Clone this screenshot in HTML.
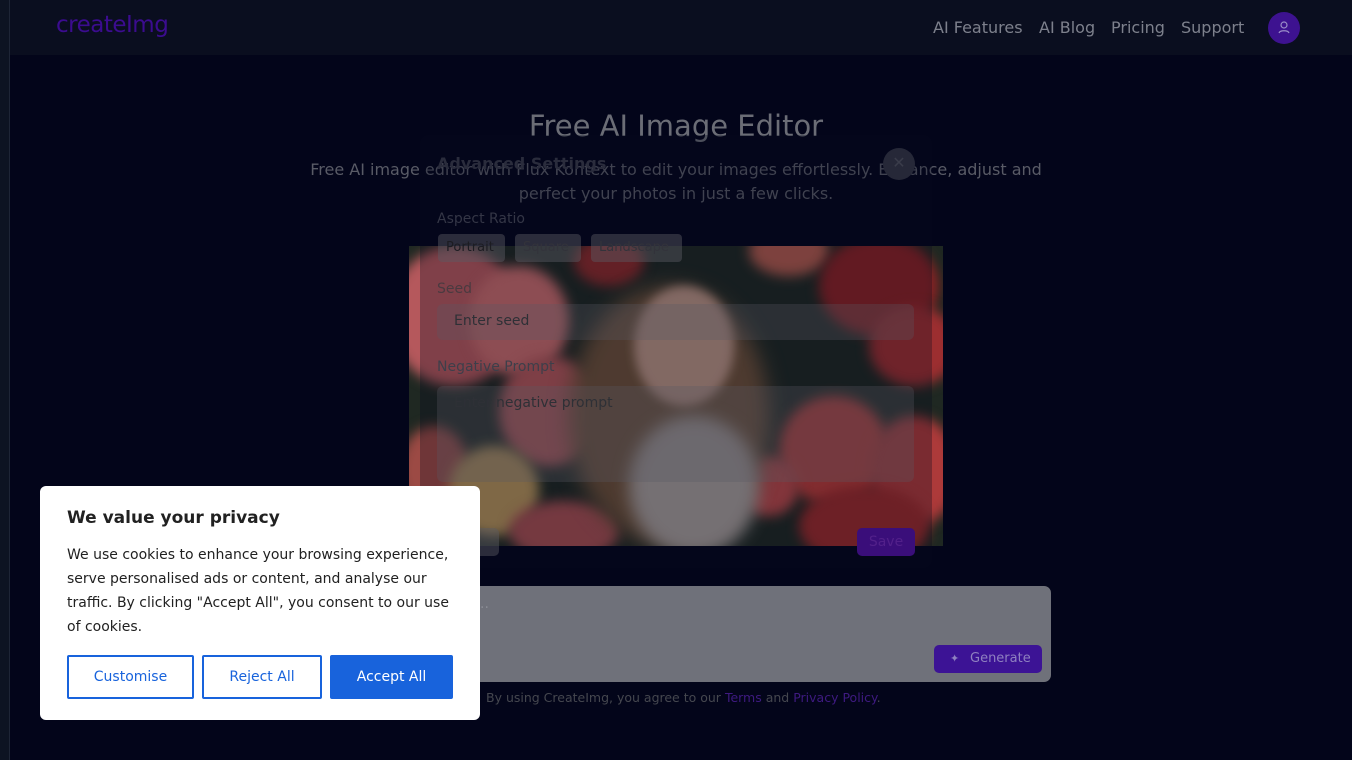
<!DOCTYPE html>
<html><head><meta charset="utf-8"><style>
*{margin:0;padding:0;box-sizing:border-box}
body{width:1352px;height:760px;overflow:hidden;background:#03051a;font-family:"DejaVu Sans","Liberation Sans",sans-serif;position:relative;color:#9a9ca8}
.abs{position:absolute}
.f{position:absolute;border-radius:50%}
</style></head><body>
<div class="abs" style="left:0;top:0;width:10px;height:760px;background:#0d1322;border-right:1px solid #1e2536"></div>
<div class="abs" style="left:10px;top:0;width:1342px;height:55px;background:#0a0e1f"></div>
<div class="abs" style="left:56px;top:12px;font-size:23px;color:#3b0c8f;letter-spacing:-0.5px">createImg</div>
<div class="abs" style="left:933px;top:18px;font-size:16px;color:#7d808c">AI Features</div>
<div class="abs" style="left:1039px;top:18px;font-size:16px;color:#7d808c">AI Blog</div>
<div class="abs" style="left:1111px;top:18px;font-size:16px;color:#7d808c">Pricing</div>
<div class="abs" style="left:1181px;top:18px;font-size:16px;color:#7d808c">Support</div>
<div class="abs" style="left:1268px;top:12px;width:32px;height:32px;border-radius:50%;background:#3d1290"><svg width="32" height="32" viewBox="0 0 32 32"><circle cx="16" cy="13" r="3" fill="none" stroke="#9a8cc8" stroke-width="1.2"/><path d="M11 21c1-3 9-3 10 0" fill="none" stroke="#9a8cc8" stroke-width="1.2"/></svg></div>

<div class="abs" style="left:0;top:109px;width:1352px;text-align:center;font-size:29px;color:#6b6d76">Free AI Image Editor</div>
<div class="abs" style="left:300px;top:158px;width:752px;text-align:center;font-size:16px;line-height:24px;color:#595b66">Free AI image editor with Flux Kontext to edit your images effortlessly. Enhance, adjust and perfect your photos in just a few clicks.</div>

<!-- image -->
<div class="abs" style="left:409px;top:246px;width:534px;height:300px;overflow:hidden;background:#1f2822">
<div class="f" style="left:-20px;top:0px;width:130px;height:140px;background:#b5585c;filter:blur(6px)"></div>
<div class="f" style="left:60px;top:20px;width:100px;height:110px;background:#c76a6a;filter:blur(6px)"></div>
<div class="f" style="left:90px;top:110px;width:100px;height:110px;background:#b25658;filter:blur(6px)"></div>
<div class="f" style="left:-10px;top:180px;width:70px;height:90px;background:#9c4a44;filter:blur(6px)"></div>
<div class="f" style="left:40px;top:200px;width:90px;height:90px;background:#b39158;filter:blur(6px)"></div>
<div class="f" style="left:100px;top:255px;width:110px;height:60px;background:#a54e50;filter:blur(6px)"></div>
<div class="f" style="left:165px;top:-10px;width:70px;height:50px;background:#8c2a2a;filter:blur(6px)"></div>
<div class="f" style="left:340px;top:-20px;width:80px;height:50px;background:#b05a4c;filter:blur(6px)"></div>
<div class="f" style="left:410px;top:-10px;width:120px;height:100px;background:#8a2224;filter:blur(6px)"></div>
<div class="f" style="left:460px;top:60px;width:90px;height:80px;background:#9c2e30;filter:blur(6px)"></div>
<div class="f" style="left:370px;top:150px;width:110px;height:110px;background:#b83c38;filter:blur(6px)"></div>
<div class="f" style="left:460px;top:170px;width:90px;height:110px;background:#ad3a3a;filter:blur(6px)"></div>
<div class="f" style="left:390px;top:240px;width:130px;height:80px;background:#9a2a2a;filter:blur(6px)"></div>
<div class="f" style="left:330px;top:210px;width:60px;height:60px;background:#b84848;filter:blur(6px)"></div>
<div class="f" style="left:160px;top:40px;width:200px;height:260px;background:#6d5038;filter:blur(10px)"></div>
<div class="f" style="left:225px;top:40px;width:100px;height:120px;background:#b89282;filter:blur(5px)"></div>
<div class="f" style="left:220px;top:170px;width:130px;height:140px;background:#a59c98;filter:blur(8px)"></div>
</div>

<!-- modal -->
<div class="abs" style="left:420px;top:135px;width:512px;height:433px;border-radius:8px;background:rgba(8,10,30,0.3)"></div>
<div class="abs" style="left:437px;top:154px;font-size:16px;font-weight:bold;color:#2a2c3c">Advanced Settings</div>
<div class="abs" style="left:883px;top:148px;width:32px;height:32px;border-radius:50%;background:#262838;color:#3a3c4a;text-align:center;line-height:30px;font-size:16px">✕</div>
<div class="abs" style="left:437px;top:211px;font-size:14px;color:#343646">Aspect Ratio</div>
<div class="abs" style="left:438px;top:234px;width:67px;height:28px;border-radius:4px;background:rgba(90,90,100,0.45);font-size:13px;color:#1c1c22;padding:6px 8px">Portrait</div>
<div class="abs" style="left:515px;top:234px;width:66px;height:28px;border-radius:4px;background:rgba(90,90,100,0.45);font-size:13px;color:#33333b;padding:6px 8px">Square</div>
<div class="abs" style="left:591px;top:234px;width:91px;height:28px;border-radius:4px;background:rgba(90,90,100,0.45);font-size:13px;color:#33333b;padding:6px 8px">Landscape</div>
<div class="abs" style="left:437px;top:281px;font-size:14px;color:#4a3a40">Seed</div>
<div class="abs" style="left:437px;top:304px;width:477px;height:36px;border-radius:6px;background:rgba(90,90,100,0.3);font-size:14px;color:#2e3036;padding:9px 17px">Enter seed</div>
<div class="abs" style="left:437px;top:359px;font-size:14px;color:#3d3f4a">Negative Prompt</div>
<div class="abs" style="left:437px;top:386px;width:477px;height:96px;border-radius:6px;background:rgba(90,90,100,0.3);font-size:14px;color:#2e3036;padding:9px 17px">Enter negative prompt</div>
<div class="abs" style="left:437px;top:528px;width:62px;height:28px;border-radius:5px;background:rgba(90,90,100,0.45)"></div>
<div class="abs" style="left:857px;top:528px;width:58px;height:28px;border-radius:5px;background:#3a0e7a;color:#52208a;font-size:14px;text-align:center;line-height:28px">Save</div>

<!-- prompt box -->
<div class="abs" style="left:440px;top:586px;width:611px;height:96px;border-radius:7px;background:#6f717a"></div>
<div class="abs" style="left:480px;top:596px;font-size:14px;color:#8a8c94">..</div>
<div class="abs" style="left:934px;top:645px;width:108px;height:28px;border-radius:5px;background:#3c1395;color:#8f80c0;font-size:13px;line-height:28px;padding-left:36px">Generate</div>
<div class="abs" style="left:950px;top:652px;color:#8f80c0;font-size:11px">✦</div>
<div class="abs" style="left:486px;top:690px;font-size:12.5px;color:#45474f">By using CreateImg, you agree to our <span style="color:#3e1a80">Terms</span> and <span style="color:#3e1a80">Privacy Policy</span>.</div>

<!-- cookie -->
<div class="abs" style="left:40px;top:486px;width:440px;height:234px;background:#fff;border-radius:6px"></div>
<div class="abs" style="left:67px;top:508px;font-size:17px;font-weight:bold;color:#212121">We value your privacy</div>
<div class="abs" style="left:67px;top:543px;width:395px;font-size:14px;line-height:24px;color:#212121">We use cookies to enhance your browsing experience, serve personalised ads or content, and analyse our traffic. By clicking "Accept All", you consent to our use of cookies.</div>
<div class="abs" style="left:67px;top:655px;width:127px;height:44px;border:2px solid #1863dc;border-radius:2px;color:#1863dc;font-size:14px;text-align:center;line-height:40px">Customise</div>
<div class="abs" style="left:202px;top:655px;width:120px;height:44px;border:2px solid #1863dc;border-radius:2px;color:#1863dc;font-size:14px;text-align:center;line-height:40px">Reject All</div>
<div class="abs" style="left:330px;top:655px;width:123px;height:44px;background:#1863dc;border-radius:2px;color:#fff;font-size:14px;text-align:center;line-height:44px">Accept All</div>
</body></html>
